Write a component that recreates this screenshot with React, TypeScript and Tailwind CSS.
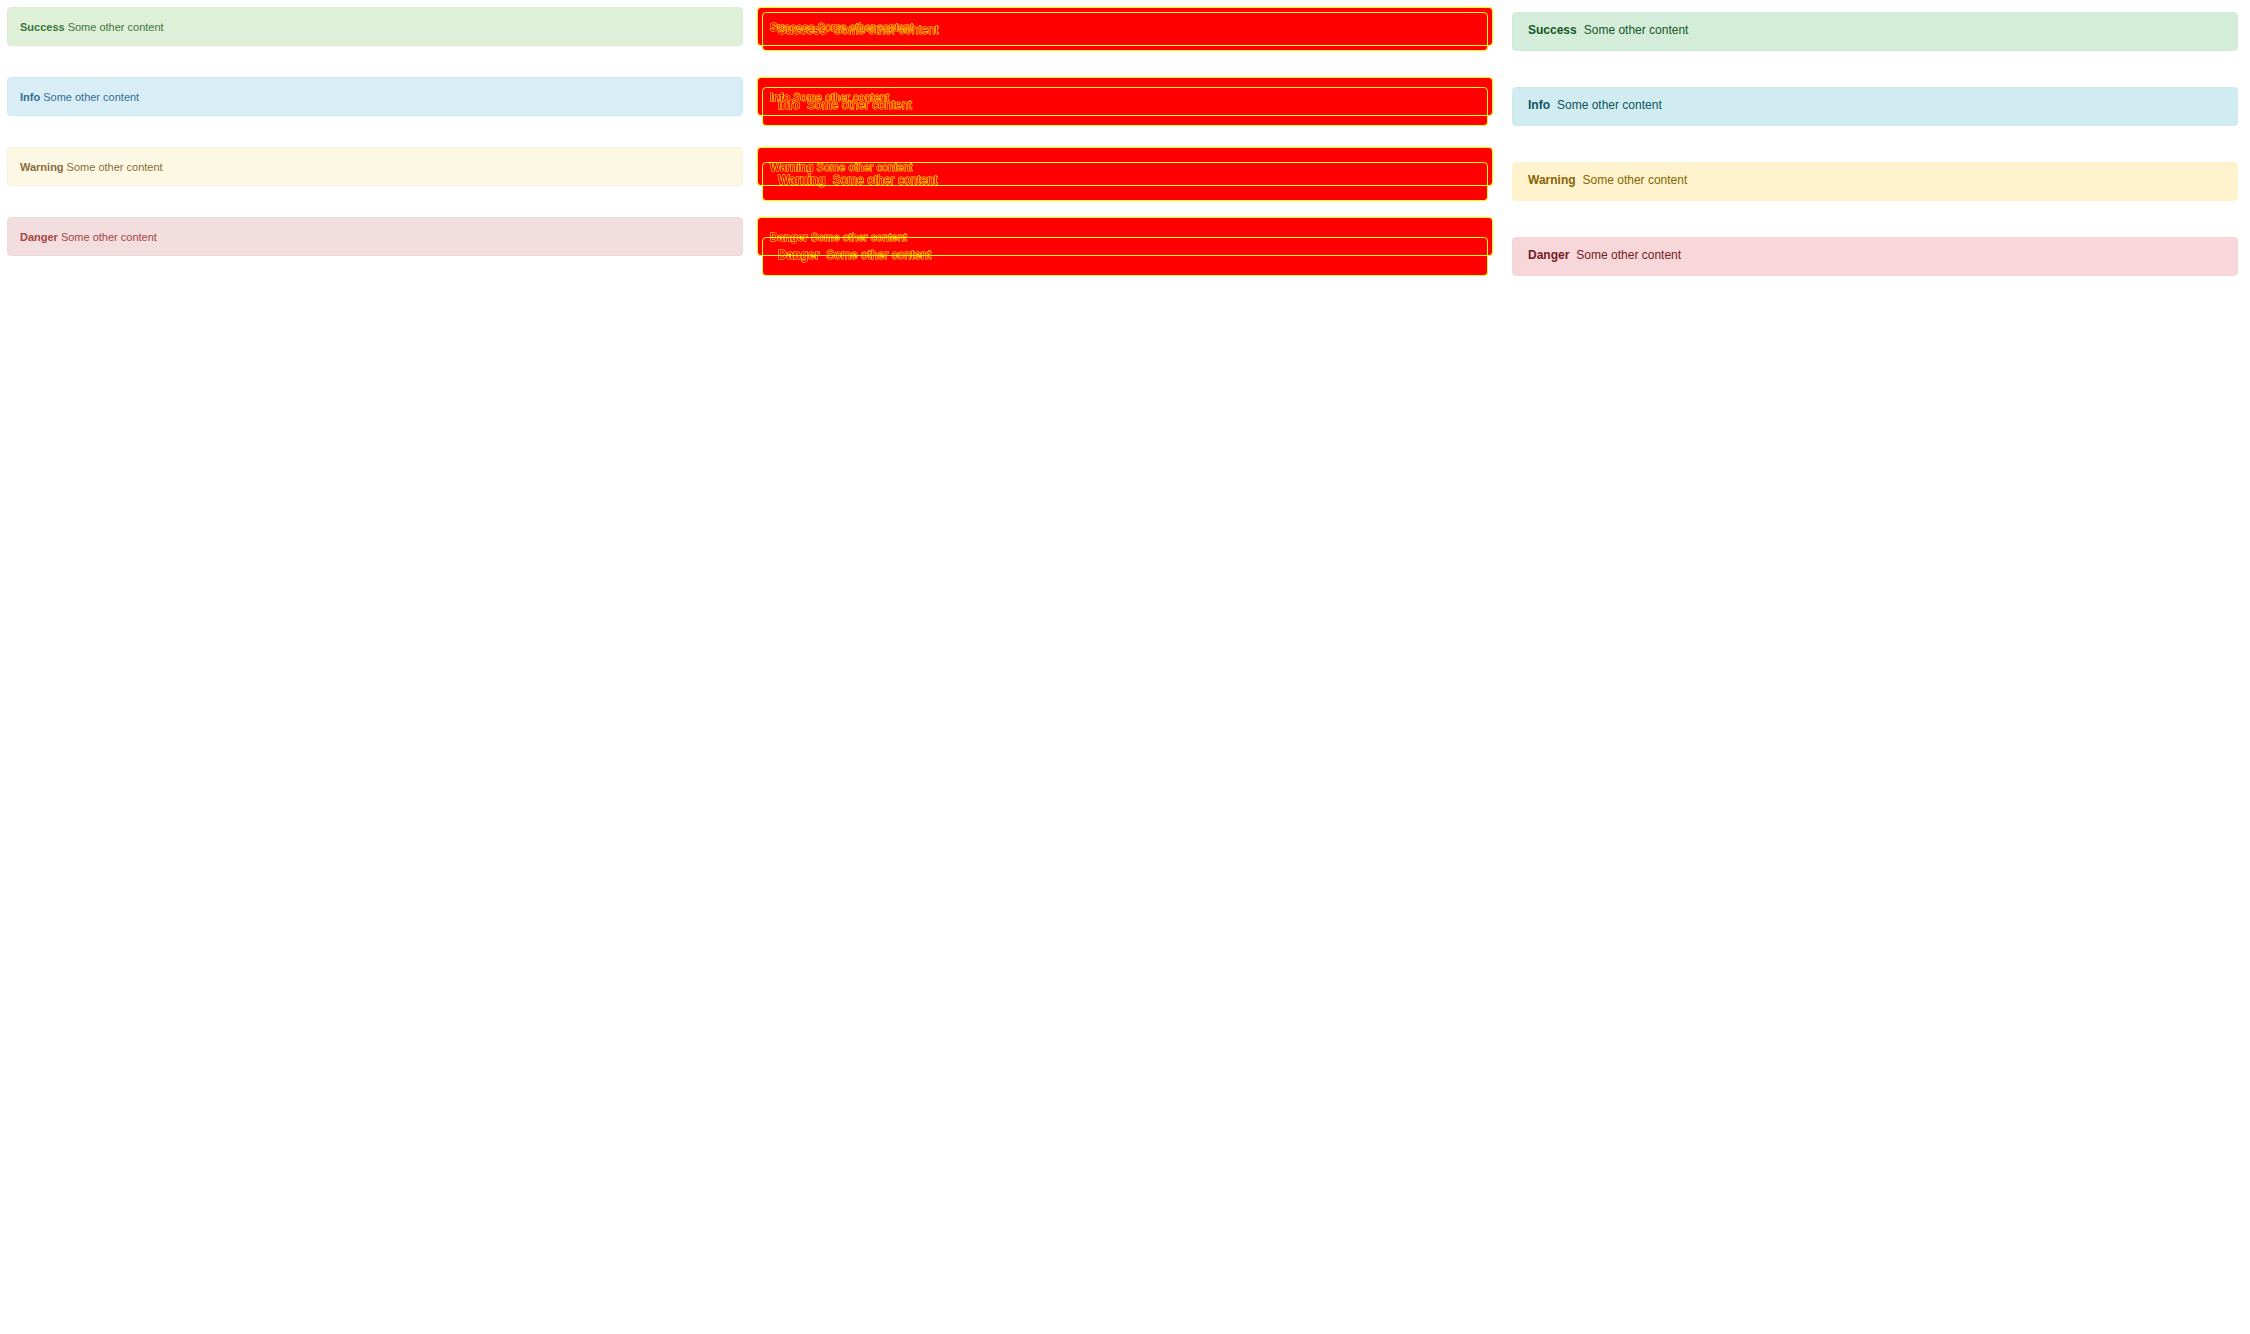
import React from "react";
import clsx from "clsx";

type Kind = "Success" | "Info" | "Warning" | "Danger";
type Version = "old" | "new";

const kinds: Kind[] = ["Success", "Info", "Warning", "Danger"];

const colors: Record<Version, Record<Kind, string>> = {
  old: {
    Success: "border-[#dbedd0] bg-[#dff0d8] text-[#3c763d]",
    Info: "border-[#cdebf4] bg-[#d9edf7] text-[#31708f]",
    Warning: "border-[#fbf1d9] bg-[#fcf8e3] text-[#8a6d3b]",
    Danger: "border-[#efd8da] bg-[#f2dede] text-[#a94442]",
  },
  new: {
    Success: "border-[#d0ebd7] bg-[#d4edda] text-[#155724]",
    Info: "border-[#ccebf0] bg-[#d1ecf1] text-[#0c5460]",
    Warning: "border-[#fff1c8] bg-[#fff3cd] text-[#856404]",
    Danger: "border-[#f7d3d7] bg-[#f8d7da] text-[#721c24]",
  },
};

const lists: Record<Version, string> = {
  old: "gap-[31px] px-[7px] pt-[7px]",
  new: "gap-9 px-3 pt-3",
};

const boxes: Record<Version, string> = {
  old: "gap-[3px] px-3 pt-3 pb-[10px] text-[11px] leading-[15px]",
  new: "gap-[7px] px-[15px] pt-2 pb-[11px] text-[12px] leading-[18px]",
};

// Edge view: yellow contours on a red fill.
const edges =
  "border-[#ffff00] bg-[#ff0000] text-[#ff0000] [-webkit-text-stroke:1px_#ffff00] [paint-order:stroke_fill]";

function AlertList({
  version,
  outlined = false,
  className,
}: {
  version: Version;
  outlined?: boolean;
  className?: string;
}) {
  return (
    <div className={clsx("flex flex-col", lists[version], className)}>
      {kinds.map((kind) => (
        <div
          key={kind}
          role="alert"
          className={clsx(
            "flex rounded-[4px] border",
            boxes[version],
            outlined ? edges : colors[version][kind],
          )}
        >
          <strong className="font-bold">{kind}</strong>
          <span>Some other content</span>
        </div>
      ))}
    </div>
  );
}

export default function App() {
  return (
    <main className="grid min-h-screen grid-cols-3 items-start bg-white font-['Liberation_Sans',Arial,sans-serif]">
      <AlertList version="old" />
      {/* Both versions share one cell; lighten keeps the contours of each. */}
      <section className="isolate grid items-start" aria-label="Difference">
        <AlertList version="old" outlined className="[grid-area:1/1]" />
        <AlertList version="new" outlined className="mix-blend-lighten [grid-area:1/1]" />
      </section>
      <AlertList version="new" />
    </main>
  );
}
